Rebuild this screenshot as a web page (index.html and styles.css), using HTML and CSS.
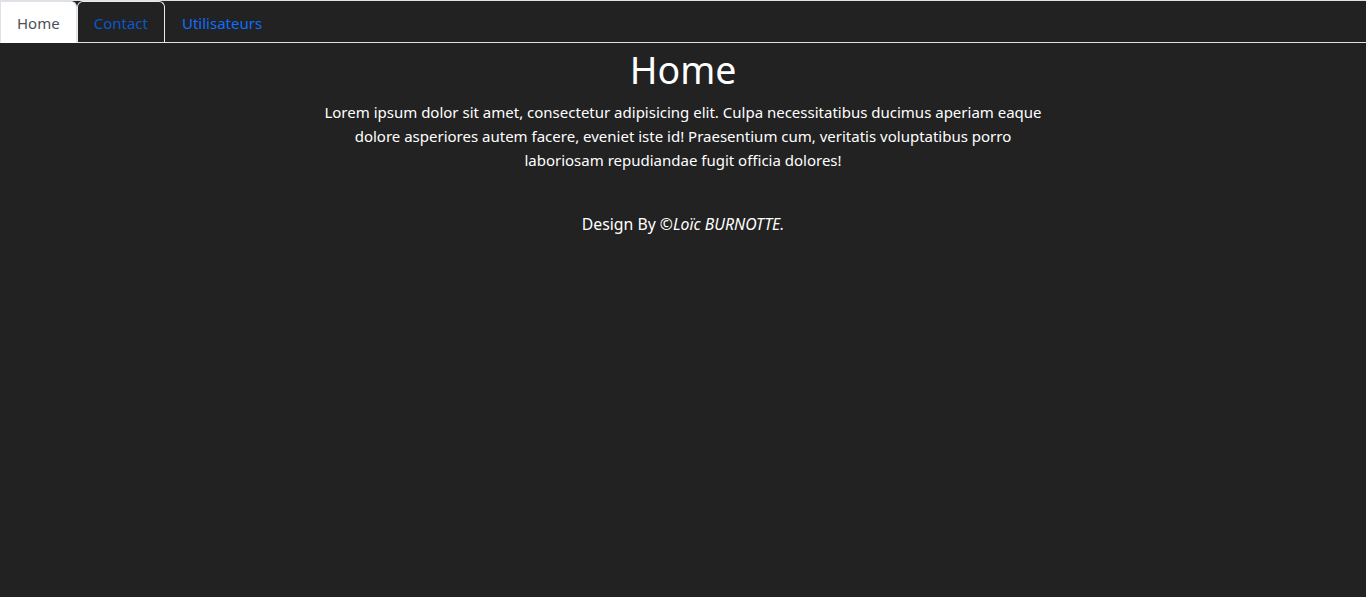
FILE: index.html
```html
<!DOCTYPE html>
<html lang="fr">
<head>
<meta charset="utf-8">
<title>Home</title>
<link rel="stylesheet" href="styles.css">
</head>
<body>
<nav class="nav-tabs">
  <a class="nav-link active" href="#">Home</a>
  <a class="nav-link hover" href="#">Contact</a>
  <a class="nav-link" href="#">Utilisateurs</a>
</nav>
<main class="content">
  <h1 class="title">Home</h1>
  <p class="lead-text">Lorem ipsum dolor sit amet, consectetur adipisicing elit. Culpa necessitatibus ducimus aperiam eaque dolore asperiores autem facere, eveniet iste id! Praesentium cum, veritatis voluptatibus porro laboriosam repudiandae fugit officia dolores!</p>
  <footer class="footer">Design By ©<em>Loïc BURNOTTE.</em></footer>
</main>
</body>
</html>
```
FILE: styles.css
```css
html, body {
  margin: 0;
  padding: 0;
}
body {
  background: #222222;
  color: #ffffff;
  font-family: "Noto Sans", "Open Sans", sans-serif;
  font-size: 15px;
  line-height: 24px;
}
.nav-tabs {
  display: flex;
  border-top: 1px solid #dee2e6;
  border-bottom: 1px solid #dee2e6;
}
.nav-link {
  display: block;
  padding: 9px 16px 7px;
  margin-bottom: -1px;
  border: 1px solid transparent;
  border-top-left-radius: 6px;
  border-top-right-radius: 6px;
  color: #0d6efd;
  text-decoration: none;
  font-size: 15px;
  line-height: 24px;
}
.nav-link.active {
  background: #ffffff;
  color: #495057;
  border-color: #dee2e6 #dee2e6 #ffffff;
  border-top-left-radius: 0;
}
.nav-link.hover {
  color: #0a58ca;
  border-color: #e9ecef #e9ecef #dee2e6;
}
.content {
  display: flex;
  flex-direction: column;
  align-items: center;
  text-align: center;
}
.title {
  margin: 3px 0 6px;
  font-size: 37.5px;
  line-height: 48px;
  font-weight: 400;
}
.lead-text {
  margin: 0;
  max-width: 728px;
}
.footer {
  margin-top: 40px;
  font-size: 15.8px;
}
.footer em {
  font-style: italic;
}
```
